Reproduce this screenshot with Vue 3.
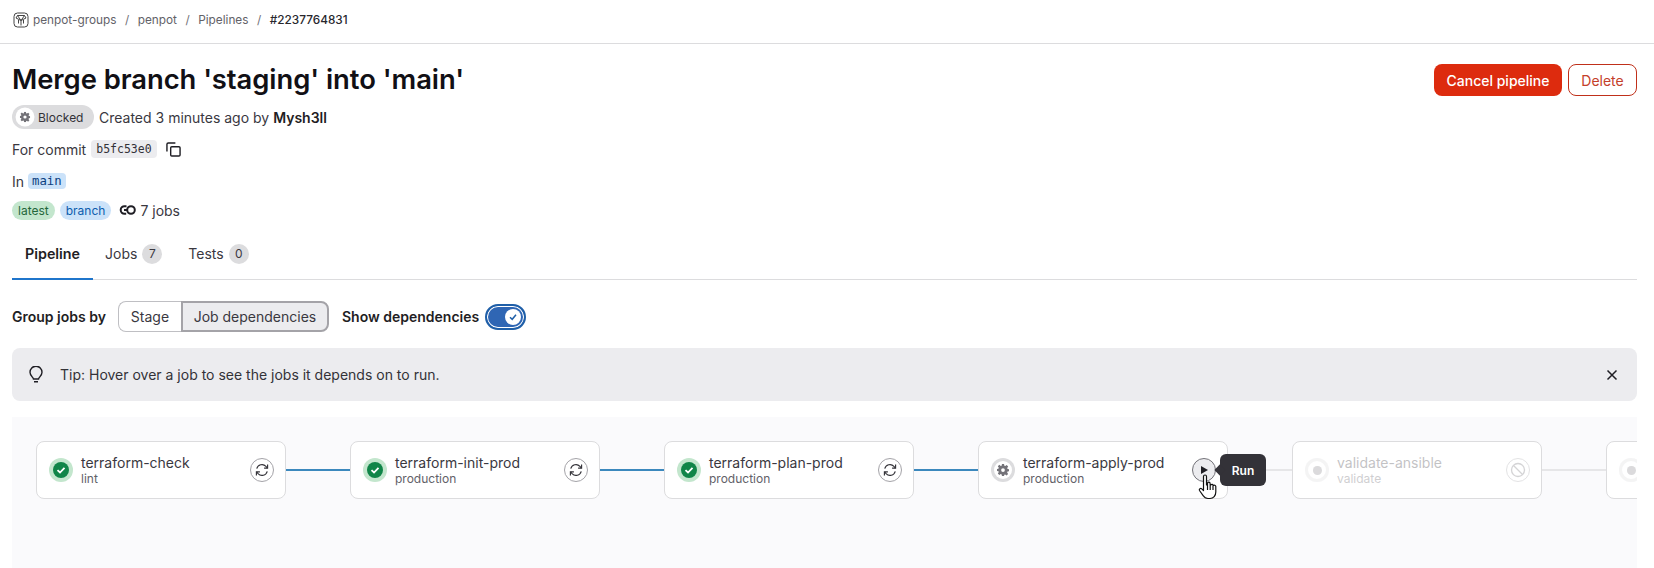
<script setup>
const jobs = [
  { name: 'terraform-check', stage: 'lint', status: 'success', action: 'retry', link: 'blue' },
  { name: 'terraform-init-prod', stage: 'production', status: 'success', action: 'retry', link: 'blue' },
  { name: 'terraform-plan-prod', stage: 'production', status: 'success', action: 'retry', link: 'blue' },
  { name: 'terraform-apply-prod', stage: 'production', status: 'manual', action: 'play', link: 'grey' },
  { name: 'validate-ansible', stage: 'validate', status: 'created', action: 'cancel', link: 'grey' },
]
</script>

<template>
  <div class="page">
    <nav class="crumbs">
      <svg class="logo" width="16" height="16" viewBox="0 0 16 16" fill="none" stroke="#444" stroke-width="1">
        <rect x="1" y="1" width="14" height="14" rx="3.5" />
        <path d="M4.500 3.500h7L13 6l-5 2.500L3 6zM4.500 3.500 8 8.500l3.500-5M8 8.500v5M5.500 8v3.500M10.500 8v3.500" />
      </svg>
      <span>penpot-groups</span><i>/</i><span>penpot</span><i>/</i><span>Pipelines</span><i>/</i><b>#2237764831</b>
    </nav>

    <main class="content">
      <header class="head">
        <div class="info">
          <h1>Merge branch 'staging' into 'main'</h1>
          <div class="row meta">
            <span class="status">
              <span class="gear-wrap">
                <svg width="12" height="12" viewBox="0 0 16 16" fill="#737278"><path fill-rule="evenodd" d="M6.600 0h2.800l.4 2.200 1.200.5L12.900 1.400l2 2-1.300 1.900.5 1.200 2 .4v2.800l-2.100.4-.5 1.200 1.300 1.900-2 2-1.900-1.300-1.200.5-.3 1.600H6.600l-.4-2.100-1.200-.5-1.900 1.300-2-2 1.300-1.900-.5-1.200L0 9.400V6.600l1.900-.4.500-1.200-1.300-1.900 2-2L5 2.700l1.200-.5zM8 5.500a2.500 2.500 0 1 0 0 5 2.500 2.500 0 0 0 0-5z"/></svg>
              </span>
              Blocked
            </span>
            <span>Created 3 minutes ago by <strong>Mysh3ll</strong></span>
          </div>
          <div class="row commit">
            <span>For commit</span>
            <code class="sha">b5fc53e0</code>
            <svg class="copy" width="15" height="15" viewBox="0 0 16 16" fill="none" stroke="#1f1e24" stroke-width="1.500"><path d="M1 10V2.500A1.500 1.500 0 0 1 2.500 1H10"/><rect x="5" y="5" width="10" height="10" rx="1.200"/></svg>
          </div>
          <div class="row branch"><span>In</span><code class="ref">main</code></div>
          <div class="row tags">
            <span class="pill green">latest</span>
            <span class="pill blue">branch</span>
            <svg class="links" width="17" height="12" viewBox="0 0 17 12" fill="none" stroke="#1f1e24" stroke-width="2"><circle cx="12" cy="6" r="3.800"/><path d="M7.500 2.200H5.500a3.800 3.800 0 0 0 0 7.600h1.700M5 6h3"/></svg>
            <span>7 jobs</span>
          </div>
        </div>
        <div class="actions">
          <button class="btn danger">Cancel pipeline</button>
          <button class="btn outline">Delete</button>
        </div>
      </header>

      <div class="tabs">
        <span class="tab active">Pipeline</span>
        <span class="tab">Jobs <em>7</em></span>
        <span class="tab">Tests <em>0</em></span>
      </div>

      <div class="controls">
        <strong>Group jobs by</strong>
        <div class="segment">
          <span class="seg">Stage</span>
          <span class="seg on">Job dependencies</span>
        </div>
        <strong class="show">Show dependencies</strong>
        <span class="toggle">
          <span class="knob">
            <svg width="10" height="10" viewBox="0 0 10 10" fill="none" stroke="#1f5fa8" stroke-width="1.500"><path d="M2 5.300 4.200 7.300 8 2.800"/></svg>
          </span>
        </span>
      </div>

      <div class="alert">
        <svg width="16" height="18" viewBox="0 0 16 18" fill="none" stroke="#1f1e24" stroke-width="1.400"><path d="M5.500 13c0-1.500-3.500-3-3.500-6.800a6 6 0 0 1 12 0C14 10 10.500 11.500 10.500 13zM6 15.800h4"/></svg>
        <span class="tip">Tip: Hover over a job to see the jobs it depends on to run.</span>
        <svg class="close" width="12" height="12" viewBox="0 0 12 12" stroke="#1f1e24" stroke-width="1.500"><path d="M1.500 1.500l9 9M10.500 1.500l-9 9"/></svg>
      </div>

      <section class="graph">
        <template v-for="job in jobs" :key="job.name">
          <article class="node" :class="{ dim: job.status === 'created' }">
            <span class="badge" :class="job.status">
              <span v-if="job.status === 'success'" class="dot">
                <svg width="10" height="10" viewBox="0 0 10 10" fill="none" stroke="#fff" stroke-width="1.800"><path d="M1.500 5.200 4 7.500 8.500 2.800"/></svg>
              </span>
              <svg v-else-if="job.status === 'manual'" width="12" height="12" viewBox="0 0 16 16" fill="#737278"><path fill-rule="evenodd" d="M6.600 0h2.800l.4 2.200 1.200.5L12.900 1.400l2 2-1.300 1.900.5 1.200 2 .4v2.800l-2.100.4-.5 1.200 1.300 1.900-2 2-1.900-1.300-1.200.5-.3 1.600H6.600l-.4-2.100-1.200-.5-1.900 1.300-2-2 1.300-1.900-.5-1.200L0 9.400V6.600l1.900-.4.500-1.200-1.300-1.900 2-2L5 2.700l1.200-.5zM8 5.500a2.500 2.500 0 1 0 0 5 2.500 2.500 0 0 0 0-5z"/></svg>
              <span v-else class="grey-dot"></span>
            </span>
            <span class="label">
              <span class="name">{{ job.name }}</span>
              <span class="stage">{{ job.stage }}</span>
            </span>
            <span class="act" :class="job.action">
              <svg v-if="job.action === 'retry'" width="14" height="14" viewBox="0 0 16 16" fill="none" stroke="#333238" stroke-width="1.300"><path d="M2 6.500A6.200 6.200 0 0 1 12.500 3.800L14.200 5.800M14 9.500A6.200 6.200 0 0 1 3.500 12.200L1.800 10.200"/><path d="M14.400 1.800v4h-4M1.600 14.200v-4h4"/></svg>
              <svg v-else-if="job.action === 'play'" width="10" height="10" viewBox="0 0 10 10" fill="#1f1e24"><path d="M2 1l7 4-7 4z"/></svg>
              <svg v-else width="16" height="16" viewBox="0 0 16 16" fill="none" stroke="#737278" stroke-width="1.300"><circle cx="8" cy="8" r="6.500"/><path d="M3.500 3.500l9 9"/></svg>
            </span>
            <template v-if="job.action === 'play'">
              <span class="tooltip">Run</span>
              <svg class="hand" width="20" height="26" viewBox="0 0 20 26" fill="#fff" stroke="#111" stroke-width="1.200" stroke-linejoin="round"><path d="M5.500 2.500a1.500 1.500 0 0 1 3 0v8.500l1-.3v-1.200a1.300 1.300 0 0 1 2.600 0l.1 1.500.8-.2a1.300 1.300 0 0 1 2.200.6l.6-.1a1.400 1.400 0 0 1 2 1.300V18c0 3.500-2.300 6.500-5.800 6.500h-2c-2.500 0-3.700-1-4.700-2.700L1.500 16.500c-.8-1.500 1-2.800 2.300-1.600l1.700 1.700zM9.500 11v5M12.200 11v5M15 11.500V16"/></svg>
            </template>
          </article>
          <span class="link" :class="job.link"></span>
        </template>
        <article class="node dim stub">
          <span class="badge created"><span class="grey-dot"></span></span>
        </article>
      </section>
    </main>
  </div>
</template>

<style>
html, body { margin: 0; background: #fff; overflow: hidden; }
</style>

<style scoped>
.page { width: 1654px; height: 568px; overflow: hidden; font-family: Inter, "Noto Sans", sans-serif; font-size: 14px; color: #3a383f; background: #fff; }
.crumbs { height: 44px; box-sizing: border-box; border-bottom: 1px solid #dcdcde; padding: 0 0 4px 13px; display: flex; align-items: center; font-size: 11.800px; color: #626168; }
.crumbs .logo { margin-right: 4px; }
.crumbs i { font-style: normal; margin: 0 8.500px; color: #737278; }
.crumbs b { font-weight: 500; color: #28272d; }
.content { padding: 0 17px 0 12px; }
.head { display: flex; justify-content: space-between; align-items: flex-start; }
h1 { margin: 17px 0 0; height: 36px; font-size: 27.400px; line-height: 36px; font-weight: 600; color: #111015; letter-spacing: -0.05px; }
.row { display: flex; align-items: center; }
.meta { margin-top: 8px; height: 24px; gap: 5px; }
.meta strong { font-weight: 600; color: #1f1e24; }
.status { height: 24px; box-sizing: border-box; width: 82px; border-radius: 12px; background: #dcdcde; display: flex; align-items: center; font-size: 12px; color: #333238; gap: 2px; padding-left: 1px; }
.gear-wrap { width: 22px; height: 22px; border-radius: 50%; background: #fff; display: flex; align-items: center; justify-content: center; transform: scale(.86); margin-left: 1px; }
.commit { margin-top: 8px; height: 24px; gap: 5px; }
code { font-family: "DejaVu Sans Mono", "Liberation Mono", monospace; font-size: 11.500px; border-radius: 4px; }
.sha { background: #ececef; padding: 2px 5px; color: #333238; }
.copy { margin-left: 4px; }
.branch { margin-top: 8px; height: 24px; gap: 4px; }
.ref { background: #cbe2f9; color: #0b3f80; padding: 1px 4px; font-size: 12.300px; }
.tags { margin-top: 5px; height: 24px; gap: 5px; }
.pill { height: 19px; border-radius: 10px; font-size: 12px; line-height: 19px; padding: 0 6px; }
.green { background: #c3e6cd; color: #24663b; }
.blue { background: #cbe2f9; color: #0b5cad; }
.links { margin-left: 3px; margin-right: -1px; }
.actions { display: flex; gap: 6px; margin-top: 20px; }
.btn { height: 32px; border-radius: 8px; font: 400 14px Inter, sans-serif; padding: 0; }
.danger { width: 128px; background: #dd2b0e; border: 0; color: #fff; font-weight: 500; }
.outline { width: 69px; background: #fff; border: 1px solid #c0301a; color: #c4402a; }
.tabs { margin-top: 12px; height: 45px; border-bottom: 1px solid #dcdcde; display: flex; }
.tab { box-sizing: border-box; height: 46px; padding: 0 12px 7px; display: flex; align-items: center; gap: 5px; color: #3a383f; }
.tab.active { width: 81px; padding: 0 0 5px 13px; font-weight: 600; font-size: 14.300px; color: #1f1e24; border-bottom: 2px solid #1f75cb; }
.tab em { width: 20px; height: 20px; border-radius: 10px; background: #dcdcde; font-style: normal; font-size: 12px; display: flex; align-items: center; justify-content: center; }
.tab + .tab + .tab { margin-left: 2px; }
.controls { margin-top: 21px; height: 31px; display: flex; align-items: center; }
.controls strong { font-weight: 600; color: #1f1e24; font-size: 14px; }
.segment { margin-left: 12px; display: flex; height: 31px; box-sizing: border-box; border-radius: 8px; }
.seg { display: flex; align-items: center; justify-content: center; box-sizing: border-box; }
.seg:first-child { width: 63px; border: 1px solid #bfbfc3; border-right: 0; border-radius: 8px 0 0 8px; }
.seg.on { width: 148px; background: #ececef; border: 2px solid #a4a3a8; border-radius: 0 8px 8px 0; }
.show { margin-left: 13px; }
.toggle { margin-left: 6px; width: 41px; height: 26px; box-sizing: border-box; border-radius: 13px; background: #2f66b4; border: 2px solid #1f5fa8; box-shadow: inset 0 0 0 1px #fff; display: flex; align-items: center; justify-content: flex-end; padding-right: 3px; }
.knob { width: 16px; height: 16px; border-radius: 50%; background: #fff; display: flex; align-items: center; justify-content: center; }
.alert { margin-top: 16px; height: 53px; border-radius: 8px; background: #ececef; display: flex; align-items: center; padding: 0 19px 0 16px; color: #333238; }
.tip { margin-left: 16px; flex: 1; }
.graph { margin-top: 16px; height: 151px; box-sizing: border-box; padding: 24px 0 0 24px; background: #fafafc; display: flex; align-items: flex-start; overflow: hidden; }
.node { position: relative; flex: 0 0 250px; height: 58px; box-sizing: border-box; background: #fff; border: 1px solid #dcdcde; border-radius: 8px; display: flex; align-items: center; padding: 0 11px 0 12px; }
.badge { flex: none; width: 24px; height: 24px; border-radius: 50%; display: flex; align-items: center; justify-content: center; background: #ececef; }
.badge.success { background: #c3e6cd; }
.badge.manual { background: #dcdcde; }
.badge.manual::before { content: ""; position: absolute; width: 18px; height: 18px; border-radius: 50%; background: #fff; }
.badge.manual svg { position: relative; }
.dot { width: 16px; height: 16px; border-radius: 50%; background: #108548; display: flex; align-items: center; justify-content: center; }
.grey-dot { width: 9px; height: 9px; border-radius: 50%; background: #89888d; }
.badge.created { background: #dcdcde; box-shadow: inset 0 0 0 3px #dcdcde, inset 0 0 0 8px #fff; }
.label { margin-left: 8px; flex: 1; display: flex; flex-direction: column; min-width: 0; }
.name { font-size: 14px; line-height: 17px; color: #3a383f; }
.stage { font-size: 12px; line-height: 15px; color: #626168; }
.act { flex: none; width: 24px; height: 24px; box-sizing: border-box; border-radius: 50%; border: 1px solid #a4a3a8; background: #fff; display: flex; align-items: center; justify-content: center; }
.act.play { background: #ececef; border-color: #737278; }
.dim > * { opacity: .3; }
.stub { flex-basis: 250px; }
.link { flex: 0 0 64px; height: 2px; margin-top: 28px; }
.link.blue { background: #3b88bd; }
.link.grey { background: #e6e6e8; }
.tooltip { position: absolute; left: 241px; top: 12px; width: 46px; height: 32px; box-sizing: border-box; border-radius: 6px; background: #333238; color: #fff; font-size: 12px; font-weight: 600; display: flex; align-items: center; justify-content: center; z-index: 2; }
.tooltip::before { content: ""; position: absolute; left: -4px; top: 12px; width: 8px; height: 8px; background: #333238; transform: rotate(45deg); }
.hand { position: absolute; left: 219px; top: 32px; z-index: 3; }
</style>
